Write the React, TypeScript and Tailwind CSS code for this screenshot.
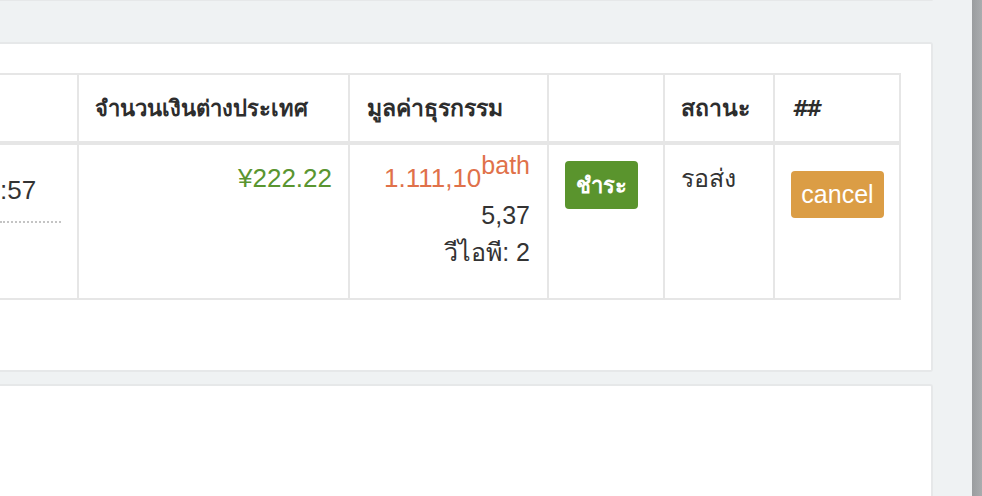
import React from "react";

const font = { fontFamily: '"Liberation Sans", Arial, sans-serif' };

export default function App() {
  return (
    <div
      className="w-[982px] h-[496px] overflow-hidden flex bg-[#eff2f3] text-[#333333]"
      style={font}
    >
      <div className="w-[972px] h-full flex flex-col pr-[39px]">
        {/* bottom edge of previous card */}
        <div className="h-[2px] w-full bg-white border-b-2 border-r-2 border-[#e6e8e9] rounded-br-[3px] -mt-[1px]" />

        {/* card 1 */}
        <div className="mt-[41px] h-[330px] shrink-0 bg-white border-2 border-l-0 border-[#e6e8e9] rounded-r-[3px] pt-[29px] pr-[30px]">
          <div className="w-[901px]">
            {/* header */}
            <div className="flex h-[72px] border-t-2 border-b-4 border-[#e6e6e6] text-[23px] font-bold text-[#2d2d2d]">
              <div className="w-[79px] border-r-2 border-[#e6e6e6]" />
              <div className="w-[271px] border-r-2 border-[#e6e6e6] pl-[16px] pt-[15px] leading-[37px] text-[22px]">
                จำนวนเงินต่างประเทศ
              </div>
              <div className="w-[199px] border-r-2 border-[#e6e6e6] pl-[17px] pt-[15px] leading-[37px]">
                มูลค่าธุรกรรม
              </div>
              <div className="w-[116px] border-r-2 border-[#e6e6e6]" />
              <div className="w-[110px] border-r-2 border-[#e6e6e6] pl-[16px] pt-[15px] leading-[37px]">
                สถานะ
              </div>
              <div className="w-[126px] border-r-2 border-[#e6e6e6] pl-[17px] pt-[15px] leading-[37px]">
                <span className="font-['DejaVu_Sans',sans-serif] font-bold italic text-[21px] tracking-[-1px]">##</span>
              </div>
            </div>

            {/* body row */}
            <div className="flex h-[155px] border-b-2 border-[#e6e6e6] text-[25px] leading-[37px]">
              <div className="w-[79px] border-r-2 border-[#e6e6e6] pt-[27px]">
                <div className="leading-[37px] text-[26px]">:57</div>
                <div className="mt-[12px] w-[61px] border-b-2 border-dotted border-[#c4c4c4]" />
              </div>
              <div className="w-[271px] border-r-2 border-[#e6e6e6] pt-[15px] pr-[16px] text-right text-[26px] text-[#5a9530]">
                ¥222.22
              </div>
              <div className="w-[199px] border-r-2 border-[#e6e6e6] pt-[15px] pr-[17px] text-right">
                <div className="text-[#e0714a] text-[26px]">
                  1.111,10
                  <span className="relative -top-[13px] text-[25px]">bath</span>
                </div>
                <div>5,37</div>
                <div>วีไอพี: 2</div>
              </div>
              <div className="w-[116px] border-r-2 border-[#e6e6e6] pl-[16px] pt-[16px]">
                <div className="w-[73px] h-[48px] rounded-[4px] bg-[#5a942d] text-white text-[22px] font-bold flex items-center justify-center">
                  ชำระ
                </div>
              </div>
              <div className="w-[110px] border-r-2 border-[#e6e6e6] pl-[16px] pt-[15px]">
                รอส่ง
              </div>
              <div className="w-[126px] border-r-2 border-[#e6e6e6] pl-[16px] pt-[26px]">
                <div className="w-[93px] h-[47px] rounded-[4px] bg-[#db9d45] text-white text-[25px] flex items-center justify-center">
                  cancel
                </div>
              </div>
            </div>
          </div>
        </div>

        {/* card 2 */}
        <div className="mt-[12px] flex-1 bg-white border-2 border-l-0 border-b-0 border-[#e6e8e9] rounded-tr-[3px]" />
      </div>
      <div className="w-[10px] h-full bg-gradient-to-r from-[#9a9d9f] to-[#a9acae]" />
    </div>
  );
}
